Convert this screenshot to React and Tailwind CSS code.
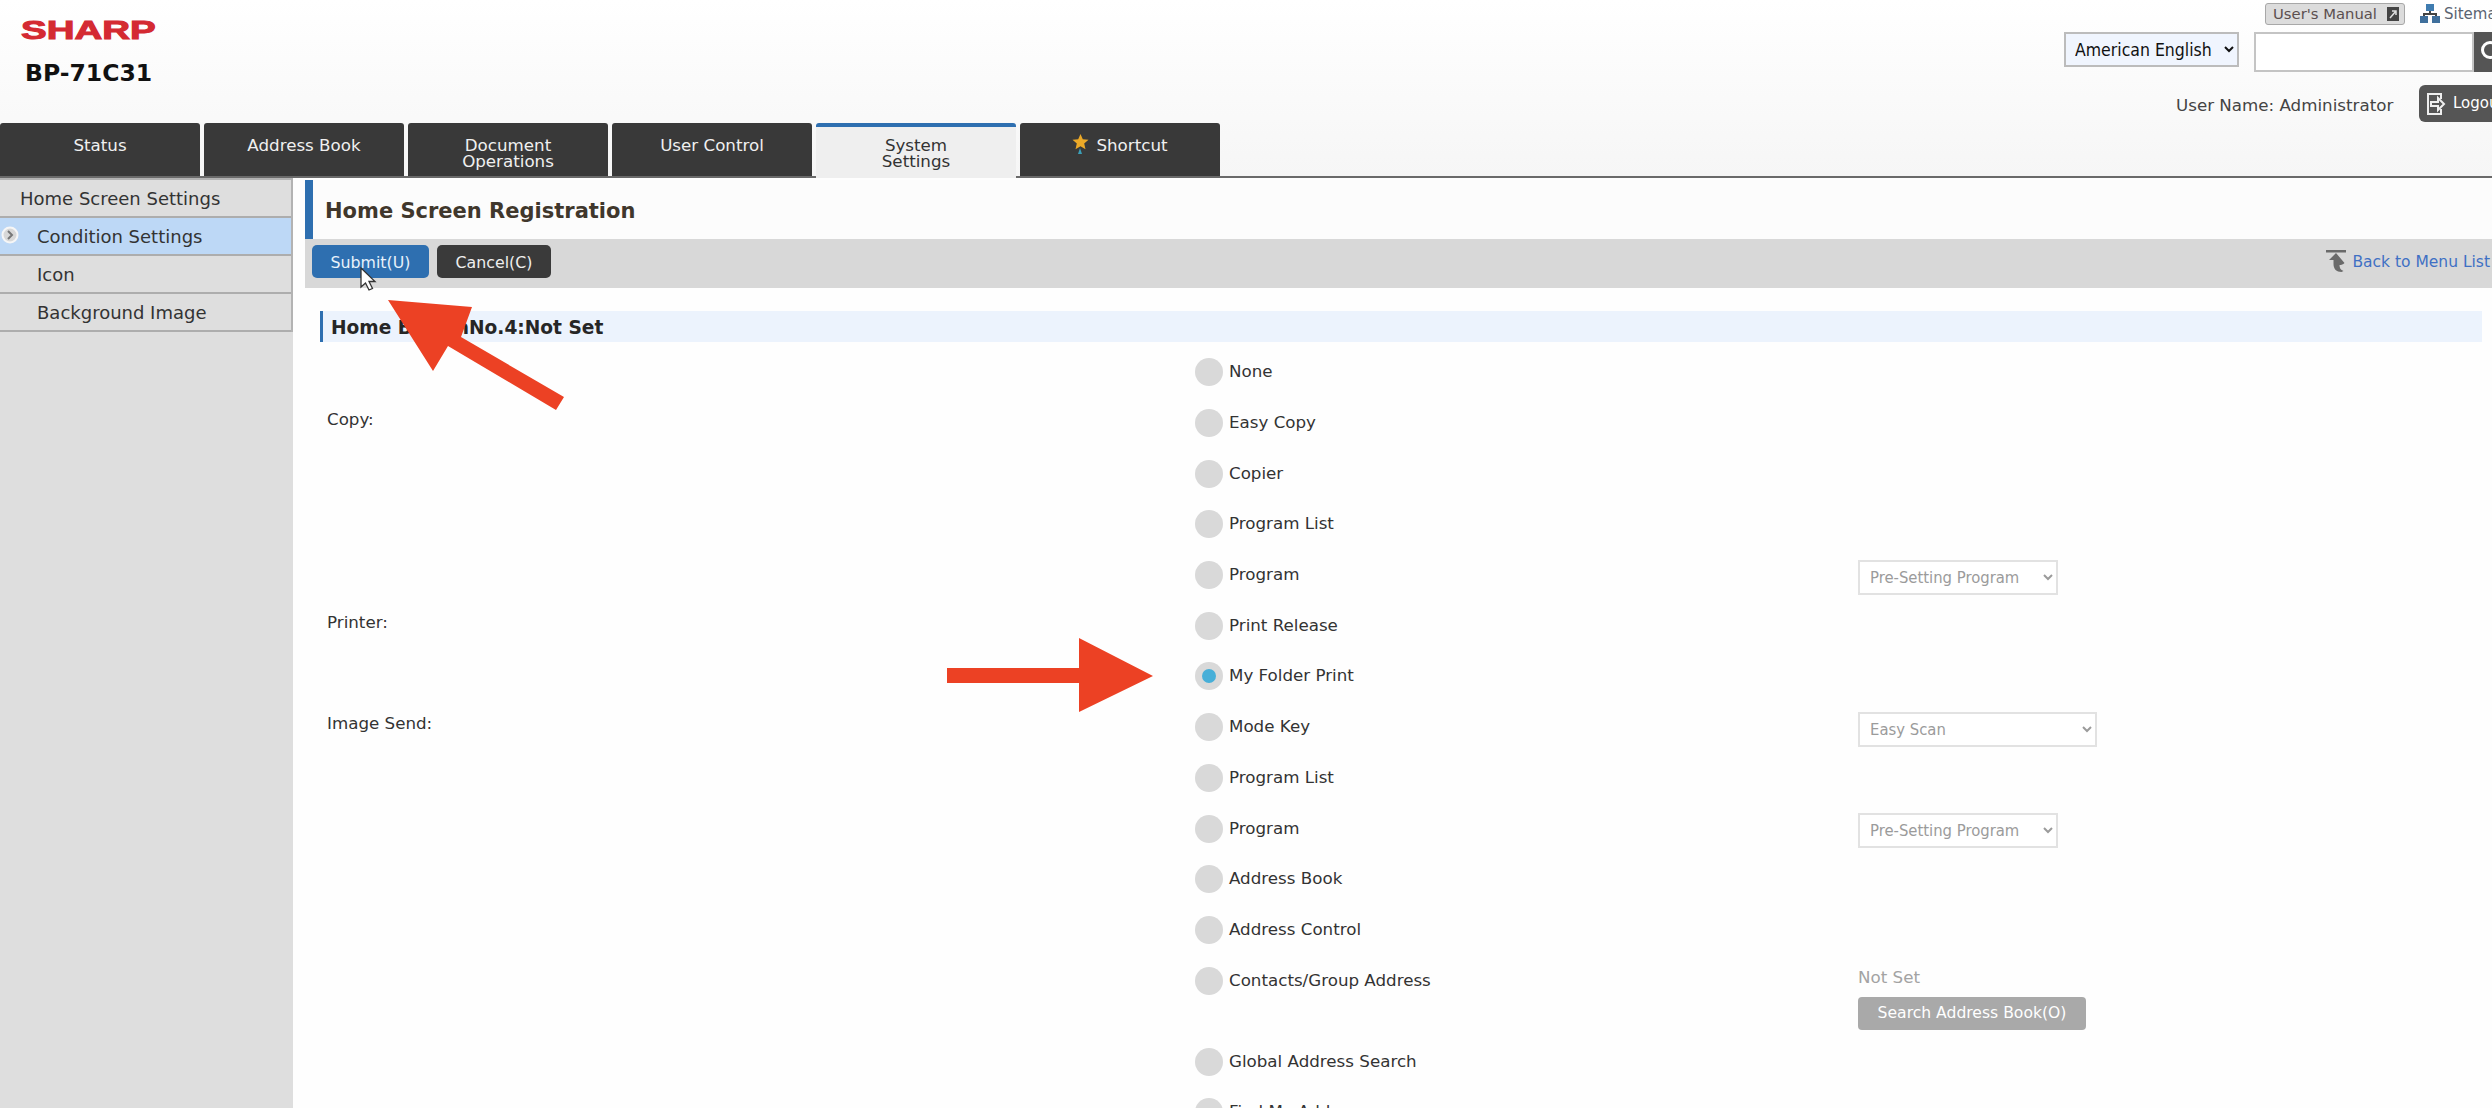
import React from "react";

const tabs = [
  { label: "Status" },
  { label: "Address Book" },
  { label: "Document\nOperations" },
  { label: "User Control" },
  { label: "System\nSettings", active: true },
  { label: "Shortcut", star: true },
];

const sideItems = [
  { label: "Home Screen Settings", top: true },
  { label: "Condition Settings", active: true },
  { label: "Icon" },
  { label: "Background Image" },
];

const rows = [
  { label: "None" },
  { label: "Easy Copy", cat: "Copy:" },
  { label: "Copier" },
  { label: "Program List" },
  { label: "Program", select: "Pre-Setting Program", selectWidth: "w-[200px]" },
  { label: "Print Release", cat: "Printer:" },
  { label: "My Folder Print", checked: true },
  { label: "Mode Key", cat: "Image Send:", select: "Easy Scan", selectWidth: "w-[239px]" },
  { label: "Program List" },
  { label: "Program", select: "Pre-Setting Program", selectWidth: "w-[200px]" },
  { label: "Address Book" },
  { label: "Address Control" },
  { label: "Contacts/Group Address", search: true },
  { label: "Global Address Search" },
  { label: "Find My Address" },
];

const Tab = ({ tab }) => (
  <div
    className={`w-[200px] h-[53px] rounded-t-[3px] flex justify-center text-center whitespace-pre-line leading-[16px] ${
      tab.active
        ? "bg-[#efefef] border-t-[4px] border-[#2e6fb0] text-[#333] pt-[10px] h-[55px] -mb-[2px]"
        : "bg-[#393939] text-[#f0f0f0] pt-[14px]"
    }`}
  >
    {tab.star && (
      <svg width="18" height="24" viewBox="0 0 18 24" className="-mt-[4px] mr-[6px]">
        <path d="M8 15l2 6h-4z" fill="#3b9fb8" />
        <path d="M8.500 1l2.300 5.300 5.700 .5-4.300 3.800 1.300 5.600-5-3-5 3 1.300-5.600L.5 6.800l5.700-.5z" fill="#eba928" />
      </svg>
    )}
    {tab.label}
  </div>
);

const Radio = ({ checked }) => (
  <span className="w-[28px] h-[28px] rounded-full bg-[#d9d9d9] flex items-center justify-center flex-none">
    {checked && <span className="w-[14px] h-[14px] rounded-full bg-[#47afd8]" />}
  </span>
);

const FormRow = ({ row }) => (
  <div className="grid grid-cols-[868px_663px_1fr] text-[#333]">
    <div className="h-[50.7px] flex items-center pb-[7px]">{row.cat}</div>
    <div className="h-[50.7px] flex items-center gap-[6px]">
      <Radio checked={row.checked} />
      <span className="pb-[1px]">{row.label}</span>
    </div>
    <div>
      {row.select && (
        <div className="h-[50.7px] flex items-center pt-[4px]">
          <select
            disabled
            className={`${row.selectWidth} h-[35px] bg-white border-2 border-[#e2e2e2] text-[#9b9b9b] pl-[6px] text-[16.500px] font-['DejaVu_Sans_Condensed','DejaVu_Sans',sans-serif]`}
          >
            <option>{row.select}</option>
          </select>
        </div>
      )}
      {row.search && (
        <div className="pt-[11px] flex flex-col items-start gap-[9px] h-[81px]">
          <span className="text-[#a3a3a3] leading-[22px]">Not Set</span>
          <div className="w-[228px] h-[33px] bg-[#a9a9a9] rounded-[4px] text-white text-[15.600px] flex items-center justify-center">
            Search Address Book(O)
          </div>
        </div>
      )}
    </div>
  </div>
);

export default function App() {
  return (
    <div className="relative w-[2492px] h-[1108px] overflow-hidden bg-[#fefefe] text-[16.7px] font-['DejaVu_Sans',sans-serif] flex flex-col">
      <header className="h-[178px] flex-none flex flex-col bg-gradient-to-b from-[#ffffff] to-[#f6f6f6] border-b-2 border-[#6a6a6a]">
        <div className="h-[123px] flex-none flex justify-between">
          <div className="pl-[21px] pt-[15px]">
            <div className="text-[26px] leading-[30px] font-bold text-[#d42a32] font-['Liberation_Sans',sans-serif] origin-left scale-x-[1.48] w-[92px] [-webkit-text-stroke:1px_#d42a32]">
              SHARP
            </div>
            <div className="pl-[4px] mt-[14px] text-[23.500px] leading-[28px] font-bold text-[#111]">BP-71C31</div>
          </div>

          <div className="w-[430px] flex flex-col items-end pt-[3px]">
            <div className="flex items-center h-[22px] w-full pl-[203px]">
              <div className="w-[140px] h-[22px] flex-none flex items-center justify-between bg-[#dcdcdc] border border-[#a8a8a8] rounded-[3px] pl-[7px] pr-[5px] text-[#5b4f4f] text-[14.800px] whitespace-nowrap">
                User's Manual
                <svg width="12" height="14" viewBox="0 0 12 14">
                  <rect width="12" height="14" fill="#444" />
                  <path d="M3 11l6-7M5 4h4v4" stroke="#ddd" strokeWidth="1.500" fill="none" />
                </svg>
              </div>
              <svg width="20" height="20" viewBox="0 0 20 20" className="ml-[15px] flex-none">
                <path d="M10 7v3M4 14v-4h12v4" stroke="#444" strokeWidth="2" fill="none" />
                <rect x="6" y="0" width="8" height="7" fill="#3f7cb0" />
                <rect x="0" y="12" width="8" height="7" fill="#3f6f9c" />
                <rect x="12" y="12" width="8" height="7" fill="#3f6f9c" />
              </svg>
              <span className="ml-[4px] text-[#5a6472] text-[15px] whitespace-nowrap">Sitemap</span>
            </div>
            <div className="flex items-start w-full pl-[2px] mt-[7px]">
              <select className="w-[175px] h-[35px] flex-none bg-[#f0f5fe] border-2 border-[#bcbcbc] pl-[5px] text-[#111] text-[17.500px] font-['DejaVu_Sans_Condensed','DejaVu_Sans',sans-serif]">
                <option>American English</option>
              </select>
              <input className="ml-[15px] w-[220px] h-[40px] flex-none bg-white border-2 border-[#c4c4c4]" />
              <div className="w-[40px] h-[40px] flex-none bg-[#555] flex items-center pl-[6px]">
                <svg width="24" height="24" viewBox="0 0 24 24" fill="none" stroke="#fff" strokeWidth="3">
                  <circle cx="10" cy="10" r="7.500" />
                  <path d="M16 16l7 7" />
                </svg>
              </div>
            </div>
            <div className="flex items-center w-full pl-[114px] mt-[13px]">
              <span className="w-[243px] flex-none text-[#444] pt-[5px]">User Name: Administrator</span>
              <div className="w-[110px] h-[37px] flex-none bg-[#555] rounded-[6px] flex items-center pl-[7px] gap-[7px] text-white text-[15px]">
                <svg width="20" height="24" viewBox="0 0 20 24" fill="none" stroke="#eee" strokeWidth="2">
                  <path d="M15 7V2H2v20h13v-5" />
                  <path d="M5 10h7V6l6 6-6 6v-4H5z" />
                </svg>
                Logout
              </div>
            </div>
          </div>
        </div>

        <nav className="h-[53px] flex-none flex gap-[4px]">
          {tabs.map((tab) => (
            <Tab key={tab.label} tab={tab} />
          ))}
        </nav>
      </header>

      <div className="flex-1 flex min-h-0">
        <aside className="w-[293px] flex-none bg-[#dedede]">
          <ul className="border-t-2 border-r-2 border-[#b3b3b3] text-[18px]">
            {sideItems.map((item) => (
              <li
                key={item.label}
                className={`relative h-[38px] flex items-center border-b-2 border-[#adadad] text-[#333] ${
                  item.top ? "pl-[20px]" : "pl-[37px]"
                } ${item.active ? "bg-[#bdd8f6]" : ""}`}
              >
                {item.active && (
                  <svg width="18" height="18" viewBox="0 0 18 18" className="absolute left-[1px] top-[8px]">
                    <circle cx="9" cy="9" r="7.500" fill="#d8d8d8" stroke="#f6f6f6" strokeWidth="2" />
                    <path d="M7 5l4 4-4 4" fill="none" stroke="#777" strokeWidth="2" />
                  </svg>
                )}
                {item.label}
              </li>
            ))}
          </ul>
        </aside>

        <main className="flex-1 ml-[12px] pt-[2px] min-w-0">
          <div className="h-[59px] border-l-[8px] border-[#2e6fb0] pl-[12px] pt-[4px] flex items-center text-[21px] font-bold text-[#40372c] bg-[#fcfcfc]">
            Home Screen Registration
          </div>
          <div className="h-[49px] bg-[#d8d8d8] flex items-start justify-between pt-[6px] pl-[7px] pr-[2px]">
            <div className="flex gap-[8px] text-[15.800px]">
              <div className="w-[117px] h-[33px] pt-[2px] rounded-[5px] bg-[#2e6fb0] text-[#e8f2fb] flex items-center justify-center">
                Submit(U)
              </div>
              <div className="w-[114px] h-[33px] pt-[2px] rounded-[5px] bg-[#3a3a3a] text-[#eee] flex items-center justify-center">
                Cancel(C)
              </div>
            </div>
            <div className="flex items-center gap-[6px] h-[33px] text-[#3f70c4] text-[15.500px]">
              <svg width="20" height="24" viewBox="0 0 20 24" fill="#6a6a6a">
                <rect x="0" y="0" width="20" height="2.500" />
                <path d="M10 3l-7 7h4.500v4c0 5 3 8 8 8l2-1c-3-1-4-3-4-6 2 0 3.500-.5 5-2z" />
              </svg>
              <span className="pt-[3px]">Back to Menu List</span>
            </div>
          </div>

          <div className="mt-[23px] ml-[15px] mr-[10px] h-[31px] bg-[#ecf3fd] border-l-[3px] border-[#2e6fb0] pl-[8px] pt-[2px] flex items-center font-bold text-[#262626] text-[18.600px]">
            Home ButtonNo.4:Not Set
          </div>

          <div className="mt-[5px] pl-[22px]">
            {rows.map((row, i) => (
              <FormRow key={i} row={row} />
            ))}
          </div>
        </main>
      </div>

      {/* annotation arrows and pointer sit on top of the page */}
      <svg width="2492" height="1108" viewBox="0 0 2492 1108" className="absolute inset-0 pointer-events-none">
        <polygon points="388,300 472,307 461,337 564,397 556,410 448,346 433,371" fill="#ec4124" />
        <polygon points="947,668 1079,668 1079,638 1153,676 1079,712 1079,683 947,683" fill="#ec4124" />
        <path d="M361 268v19l4.500-4 3.500 7 3.500-1.500-3.500-7h6z" fill="#fff" stroke="#333" strokeWidth="1.300" />
      </svg>
    </div>
  );
}
